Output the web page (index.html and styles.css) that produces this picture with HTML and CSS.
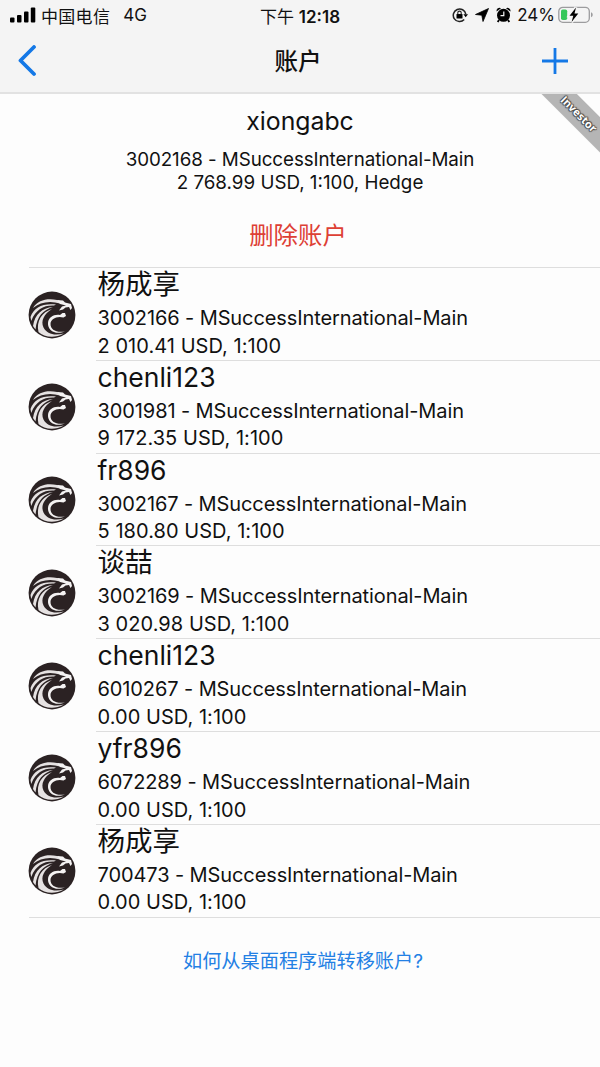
FILE: index.html
```html
<!DOCTYPE html>
<html lang="zh-CN">
<head>
    <meta charset="utf-8">
    <title>账户</title>
    <link rel="stylesheet" href="styles.css">
</head>
<body>
    <!-- 账户图标 -->
    <svg class="symbols" width="0" height="0">
        <symbol id="lion" viewBox="0 0 48 48">
            <circle cx="24" cy="24" r="23.4" fill="#2b2223"/>
            <!-- 鬃毛 -->
            <g fill="#e6e2e2">
                <path d="M5 17C10 9 19 7 29 9L35 11L32 12.500C22 9.500 12 11 5 17Z"/>
                <path d="M2.500 26C6 16 15 12 28 13.500L26 14.500C16 14 8 18 3.200 30Z"/>
                <path d="M5 35C7 23 14 17 25 16C15 19 9 25 7.500 38.500Z"/>
                <path d="M10.500 41C8 30 14 21 24 18C16 23 12.500 30 15.500 36.500C19 43 26 45 36 42.500C26 48 16 46 10.500 41Z"/>
            </g>
            <!-- 头部和下颌 -->
            <g fill="#f4f2f2">
                <path d="M29 9L35 9.500L37 11.500L43 13L44 17L42.500 19L41 16L37.500 16.500L35 18.500L31 19.500L34 15.500L38 14.500L32 13Z"/>
                <path d="M37 22L38 25L35.500 26.500C29 24.500 22.500 28 22.500 33C22.500 38.500 28 42 37 40.500C27 44.500 19.500 39 20 32C20.500 26 26 23 32 24L34.500 22Z"/>
            </g>
        </symbol>
    </svg>

    <div class="header">
        <div class="status-bar">
            <div class="status-left">
                <svg class="signal" width="26" height="16" viewBox="0 0 26 16">
                    <rect x="0" y="10.500" width="4.500" height="5" rx="1"/>
                    <rect x="7" y="8" width="4.500" height="7.500" rx="1"/>
                    <rect x="14" y="4.500" width="4.500" height="11" rx="1"/>
                    <rect x="20.800" y="0.500" width="4.500" height="15" rx="1"/>
                </svg>
                <span class="carrier">中国电信</span>
                <span class="network">4G</span>
            </div>
            <div class="status-time">下午 <b>12:18</b></div>
            <div class="status-right">
                <svg width="16" height="16" viewBox="0 0 16 16">
                    <path d="M12.200 12.600A6.300 6.300 0 1 1 13.800 7.200" fill="none" stroke="#222" stroke-width="1.500"/>
                    <path d="M11.400 7.300H16L13.700 10.300Z"/>
                    <rect x="4.500" y="7" width="6" height="4.500" rx=".6"/>
                    <path d="M5.800 7.500V5.800a1.700 1.700 0 0 1 3.400 0V7.500" fill="none" stroke="#222" stroke-width="1.100"/>
                </svg>
                <svg width="14" height="14" viewBox="0 0 14 14">
                    <path d="M13.500 .5L8 13.500L6.800 7.200L.5 6.500Z" stroke="#000" stroke-width=".8" stroke-linejoin="round"/>
                </svg>
                <svg width="15" height="16" viewBox="0 0 15 16">
                    <circle cx="7.500" cy="8.300" r="6.500"/>
                    <path d="M.6 4.600A3 3 0 0 1 5 1.300Z"/>
                    <path d="M14.400 4.600A3 3 0 0 0 10 1.300Z"/>
                    <path d="M3 13L1.700 15M12 13L13.300 15" stroke="#000" stroke-width="1.800"/>
                    <path d="M7.800 4.600V8.700H4.500" fill="none" stroke="#f4f4f4" stroke-width="1.200"/>
                </svg>
                <span class="percent">24%</span>
                <svg class="battery" width="36" height="18" viewBox="0 0 36 18">
                    <rect x=".8" y="1.300" width="30.500" height="15" rx="4" fill="none" stroke="#9c9c9e" stroke-width="1.300"/>
                    <rect x="3" y="3.500" width="6.200" height="10.600" rx="1.800" fill="#35c759"/>
                    <path d="M33 6.300C35.300 7 35.300 10.600 33 11.300Z" fill="#9c9c9e"/>
                    <path d="M18 1.500L11.500 9.700H15.300L13.600 16L20.300 7.500H16.500Z" stroke="#f4f4f4" stroke-width="3"/>
                    <path d="M18 1.500L11.500 9.700H15.300L13.600 16L20.300 7.500H16.500Z"/>
                </svg>
            </div>
        </div>
        <div class="nav-bar">
            <svg class="back" width="20" height="32" viewBox="0 0 20 32">
                <path d="M17 2L3.500 15.500L17 29"/>
            </svg>
            <div class="nav-title">账户</div>
            <svg class="add" width="28" height="28" viewBox="0 0 28 28">
                <path d="M14 1V27M1 14H27"/>
            </svg>
        </div>
    </div>

    <div class="current">
        <div class="ribbon"><span>Investor</span></div>
        <div class="current-name">xiongabc</div>
        <div class="current-info">3002168 - MSuccessInternational-Main</div>
        <div class="current-info balance">2 768.99 USD, 1:100, Hedge</div>
        <div class="delete-btn">删除账户</div>
    </div>

    <div class="account-list">
        <div class="account">
            <svg class="avatar"><use href="#lion"/></svg>
            <div class="account-body">
                <div class="account-name cjk">杨成享</div>
                <div class="account-info">3002166 - MSuccessInternational-Main</div>
                <div class="account-info balance">2 010.41 USD, 1:100</div>
            </div>
        </div>
        <div class="account">
            <svg class="avatar"><use href="#lion"/></svg>
            <div class="account-body">
                <div class="account-name">chenli123</div>
                <div class="account-info">3001981 - MSuccessInternational-Main</div>
                <div class="account-info balance">9 172.35 USD, 1:100</div>
            </div>
        </div>
        <div class="account">
            <svg class="avatar"><use href="#lion"/></svg>
            <div class="account-body">
                <div class="account-name">fr896</div>
                <div class="account-info">3002167 - MSuccessInternational-Main</div>
                <div class="account-info balance">5 180.80 USD, 1:100</div>
            </div>
        </div>
        <div class="account">
            <svg class="avatar"><use href="#lion"/></svg>
            <div class="account-body">
                <div class="account-name cjk">谈喆</div>
                <div class="account-info">3002169 - MSuccessInternational-Main</div>
                <div class="account-info balance">3 020.98 USD, 1:100</div>
            </div>
        </div>
        <div class="account">
            <svg class="avatar"><use href="#lion"/></svg>
            <div class="account-body">
                <div class="account-name">chenli123</div>
                <div class="account-info">6010267 - MSuccessInternational-Main</div>
                <div class="account-info balance">0.00 USD, 1:100</div>
            </div>
        </div>
        <div class="account">
            <svg class="avatar"><use href="#lion"/></svg>
            <div class="account-body">
                <div class="account-name">yfr896</div>
                <div class="account-info">6072289 - MSuccessInternational-Main</div>
                <div class="account-info balance">0.00 USD, 1:100</div>
            </div>
        </div>
        <div class="account">
            <svg class="avatar"><use href="#lion"/></svg>
            <div class="account-body">
                <div class="account-name cjk">杨成享</div>
                <div class="account-info">700473 - MSuccessInternational-Main</div>
                <div class="account-info balance">0.00 USD, 1:100</div>
            </div>
        </div>
    </div>

    <div class="help-link">如何从桌面程序端转移账户?</div>
</body>
</html>
```
FILE: styles.css
```css
body {
    margin: 0;
    min-height: 1067px;
    font-family: Inter, "Noto Sans CJK SC", sans-serif;
    color: #111;
    background: #fdfdfd;
    overflow: hidden;
}

.symbols {
    display: none;
}

.header {
    height: 92px;
    background: #f4f4f4;
    border-bottom: 2px solid #e2e2e2;
}

.status-bar {
    display: grid;
    grid-template-columns: 1fr auto 1fr;
    align-items: center;
    height: 30px;
    padding: 0 6px 0 10px;
    font-size: 17px;
    white-space: nowrap;
}

.status-left,
.status-right {
    display: flex;
    align-items: center;
}

.status-right {
    justify-content: flex-end;
    gap: 7px;
}

.carrier {
    margin-left: 5px;
    letter-spacing: 0.3px;
}

.network {
    margin-left: 13px;
}

.status-time {
    padding-right: 4px;
}

.status-time b {
    font-weight: 600;
}

.percent {
    margin-left: -1px;
}

.battery {
    margin-left: -4px;
}

.nav-bar {
    display: grid;
    grid-template-columns: 1fr auto 1fr;
    align-items: center;
    height: 62px;
    padding: 0 31px 0 17px;
}

.nav-title {
    padding: 0 0 2px 10px;
    font-size: 23.5px;
    font-weight: 500;
}

.back,
.add {
    fill: none;
    stroke: #1478e6;
    stroke-width: 3.8;
    stroke-linecap: round;
    stroke-linejoin: round;
}

.add {
    justify-self: end;
    stroke-width: 2.8;
    stroke-linecap: butt;
}

/* 当前账户 */
.current {
    position: relative;
    height: 173px;
    text-align: center;
}

.current-name {
    padding-top: 8px;
    font-size: 24.8px;
    line-height: 38px;
}

.current-info {
    margin-top: 9px;
    font-size: 18.8px;
    line-height: 22.5px;
    letter-spacing: -0.07px;
}

.current-info.balance {
    margin-top: 0;
    letter-spacing: 0;
}

.delete-btn {
    margin-top: 23px;
    padding-right: 4px;
    font-size: 24.4px;
    line-height: 36px;
    color: #dd4035;
}

.ribbon {
    position: absolute;
    top: 0;
    right: 0;
    display: flex;
    align-items: center;
    justify-content: center;
    box-sizing: border-box;
    width: 60px;
    height: 60px;
    padding: 0 0 20px 18px;
    background: linear-gradient(45deg, transparent 43px, #b5b5b5 44px, #b5b5b5 68px, transparent 69px);
}

.ribbon span {
    font-family: "Open Sans", sans-serif;
    font-size: 11px;
    font-weight: 700;
    line-height: 12px;
    color: #fff;
    text-shadow: 1px 0 1px #444, -1px 0 1px #444, 0 1px 1px #444, 0 -1px 1px #444;
    transform: rotate(45deg);
}

/* 账户列表 */
.account-list {
    margin-left: 29px;
    border-top: 1px solid #dedede;
}

.account {
    display: flex;
    height: 92.8px;
}

.avatar {
    width: 48px;
    height: 48px;
    margin: 22.5px 20px 0 -1px;
}

.account-body {
    flex: 1;
    box-sizing: border-box;
    height: 92.8px;
    padding-left: 1.5px;
    border-bottom: 1px solid #dedede;
}

.account:last-child .account-body {
    margin-left: -67px;
    padding-left: 68.5px;
}

.account-name {
    height: 37px;
    font-size: 26.5px;
    line-height: 33px;
}

.account-name.cjk {
    font-size: 27.5px;
}

.account-info {
    font-size: 20px;
    line-height: 27.6px;
    letter-spacing: -0.1px;
}

.account-info.balance {
    letter-spacing: 0.05px;
}

.help-link {
    padding: 28px 0 0 6px;
    font-size: 19.2px;
    line-height: 30px;
    text-align: center;
    color: #2380e4;
}
```
